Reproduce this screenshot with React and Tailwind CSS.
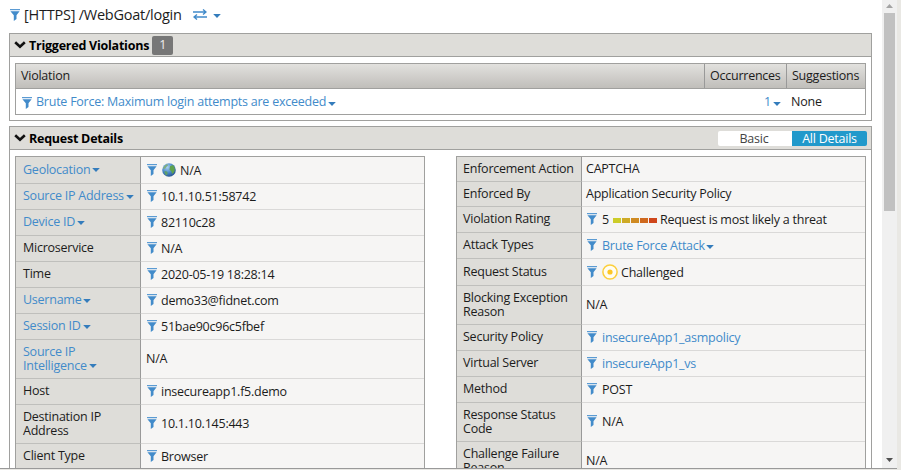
import React from "react";

function Funnel({ className = "" }) {
  return (
    <svg className={`h-[12px] w-[10px] shrink-0 ${className}`} viewBox="0 0 10 12">
      <path d="M0 0h10v1.200H0z" fill="#5b9bd3" />
      <path d="M0.4 2.200h9.200L6.500 6.300V10L3.800 11.900V6.300z" fill="#428bca" />
    </svg>
  );
}

function Caret({ className = "" }) {
  return (
    <svg className={`inline-block h-[4px] w-[8px] shrink-0 ${className}`} viewBox="0 0 8 4">
      <path d="M0.2 0h7.6L4 4z" fill="#347cbc" />
    </svg>
  );
}

function Chevron() {
  return (
    <svg className="ml-[4px] h-[8px] w-[12px] shrink-0" viewBox="0 0 12 8">
      <path d="M1.200 1.300L6 5.800l4.800-4.500" fill="none" stroke="#111" strokeWidth="2.6" />
    </svg>
  );
}

function Globe() {
  return (
    <svg className="mr-1 ml-px h-[14px] w-[14px] shrink-0" viewBox="0 0 14 14">
      <defs>
        <radialGradient id="sea" cx="38%" cy="30%" r="75%">
          <stop offset="0" stopColor="#a9d0f2" />
          <stop offset="0.55" stopColor="#4a88c8" />
          <stop offset="1" stopColor="#25508c" />
        </radialGradient>
      </defs>
      <circle cx="7" cy="7" r="6.8" fill="url(#sea)" />
      <path d="M1.500 4.500C2.500 2.500 4 1.300 5.500 1.200l.5 1.400-1.800 1.400-.8 1.600L1.200 6z" fill="#7fae7c" />
      <path d="M2.500 8l2.500.6.8 1.400-1 2.600C3.400 12 2.500 10.500 2.500 8z" fill="#5d9f6a" />
      <path d="M8 3.200l3-1.200c2 2 2.500 5 .8 7.600L10.300 11 9.400 8.400 7.500 6.500z" fill="#5fa24c" />
    </svg>
  );
}

function Challenged() {
  return (
    <svg className="mr-[3px] h-[16px] w-[16px] shrink-0" viewBox="0 0 16 16">
      <circle cx="8" cy="8" r="7.1" fill="#fffdf2" stroke="#fccf3c" strokeWidth="1.5" />
      <circle cx="8" cy="8" r="2.600" fill="#fcc626" />
    </svg>
  );
}

function Rating() {
  return (
    <span className="mr-[3px] ml-[4px] mt-px flex h-[5px] gap-px">
      <i className="w-2 bg-[#cccc29]" />
      <i className="w-2 bg-[#ceaa26]" />
      <i className="w-2 bg-[#cf8a22]" />
      <i className="w-2 bg-[#cf681e]" />
      <i className="w-2 bg-[#cf461b]" />
    </span>
  );
}

const left = [
  { label: "Geolocation", menu: true, h: "h-[27px]", filter: true, icon: <Globe />, value: "N/A" },
  { label: "Source IP Address", menu: true, h: "h-[26px]", filter: true, value: "10.1.10.51:58742" },
  { label: "Device ID", menu: true, h: "h-[26px]", filter: true, value: "82110c28" },
  { label: "Microservice", h: "h-[26px]", filter: true, value: "N/A" },
  { label: "Time", h: "h-[26px]", filter: true, value: "2020-05-19 18:28:14" },
  { label: "Username", menu: true, h: "h-[26px]", filter: true, value: "demo33@fidnet.com" },
  { label: "Session ID", menu: true, h: "h-[26px]", filter: true, value: "51bae90c96c5fbef" },
  { label: "Source IP Intelligence", menu: true, h: "h-[39px]", value: "N/A" },
  { label: "Host", h: "h-[26px]", filter: true, value: "insecureapp1.f5.demo" },
  { label: "Destination IP Address", h: "h-[39px]", filter: true, tall: true, value: "10.1.10.145:443" },
  { label: "Client Type", h: "h-[26px]", filter: true, value: "Browser" },
];

const right = [
  { label: "Enforcement Action", h: "h-[25px]", value: "CAPTCHA" },
  { label: "Enforced By", h: "h-[25px]", value: "Application Security Policy" },
  { label: "Violation Rating", h: "h-[26px]", filter: true, icon: <><span>5</span><Rating /></>, value: "Request is most likely a threat" },
  { label: "Attack Types", h: "h-[26px]", filter: true, link: true, valueMenu: true, value: "Brute Force Attack" },
  { label: "Request Status", h: "h-[27px]", filter: true, icon: <Challenged />, value: "Challenged" },
  { label: "Blocking Exception Reason", h: "h-[39px]", value: "N/A" },
  { label: "Security Policy", h: "h-[26px]", filter: true, link: true, value: "insecureApp1_asmpolicy" },
  { label: "Virtual Server", h: "h-[26px]", filter: true, link: true, value: "insecureApp1_vs" },
  { label: "Method", h: "h-[26px]", filter: true, value: "POST" },
  { label: "Response Status Code", h: "h-[39px]", filter: true, tall: true, value: "N/A" },
  { label: "Challenge Failure Reason", h: "h-[39px]", value: "N/A" },
];

function DetailTable({ rows, labelPad, valuePad, funnelGap }) {
  return (
    <div className="w-[410px] border border-[#a0a09e]">
      {rows.map((r) => (
        <div key={r.label} className={`flex leading-[14px] ${r.h}`}>
          <div className={`flex w-[125px] shrink-0 items-center border-r border-b border-r-[#999] border-b-[#bfbfbc] bg-[#deddd9] pb-px ${labelPad} ${r.menu ? "text-[#428bca]" : ""}`}>
            <span className={r.label.length > 18 ? "w-[110px]" : "whitespace-nowrap"}>
              {r.label}
              {r.menu && <Caret className="ml-[2px]" />}
            </span>
          </div>
          <div className={`flex min-w-0 flex-1 items-center border-b border-[#dad9d8] bg-[#f6f5f4] whitespace-nowrap ${valuePad} ${r.tall ? "pb-px" : ""} ${r.link ? "text-[#428bca]" : ""}`}>
            {r.filter && <Funnel className={`mb-px ml-px ${funnelGap}`} />}
            {r.icon}
            <span className={r.filter ? "pt-px" : ""}>{r.value}</span>
            {r.valueMenu && <Caret className="mt-[2px] ml-px" />}
          </div>
        </div>
      ))}
    </div>
  );
}

function SectionHeader({ title, children }) {
  return (
    <div className="flex h-[24px] items-center border border-[#a0a09e] bg-[#deddd9]">
      <Chevron />
      <h2 className="ml-[3px] pt-[3px] font-bold whitespace-nowrap text-black">{title}</h2>
      {children}
    </div>
  );
}

export default function App() {
  return (
    <div className="h-[470px] w-[901px] overflow-hidden bg-[#e9e8e4] font-['Open_Sans','Noto_Sans',sans-serif] text-[12.500px] tracking-[-0.240px] text-[#1c1c1c]">
      <div className="flex h-[469px] w-[897px] overflow-hidden border-b border-[#999] bg-white">
        <main className="w-[882px] pl-[9px]">
          <div className="flex h-[33px] items-center pb-[4px] text-[14.500px] whitespace-nowrap">
            <Funnel className="ml-px mr-[4px]" />
            <span className="leading-5">[HTTPS] /WebGoat/login</span>
            <svg className="ml-[11px] h-[11px] w-[14px]" viewBox="0 0 14 11" fill="none" stroke="#428bca" strokeWidth="1.4">
              <path d="M0 3h13M10 .5L13 3l-3 2.500M14 8H1M4 5.500L1 8l3 2.500" />
            </svg>
            <Caret className="mt-[3px] ml-[6px]" />
          </div>

          <section className="w-[863px]">
            <SectionHeader title="Triggered Violations">
              <span className="ml-[3px] flex h-[19px] w-[21px] items-center justify-center rounded-[2px] bg-[#777] pt-px text-[#eee]">1</span>
            </SectionHeader>
            <div className="h-[64px] border border-t-0 border-[#a0a09e] px-[5px] pt-[6px]">
              <div className="h-[52px] border border-[#a0a09e]">
                <div className="flex h-[25px] items-center border-b border-[#a0a09e] bg-linear-to-b from-[#e2e1de] to-[#c0beba] leading-6">
                  <span className="flex-1 pl-[5px]">Violation</span>
                  <span className="w-[82px] border-l border-[#999] pl-[5px]">Occurrences</span>
                  <span className="w-[79px] border-l border-[#999] pl-[5px]">Suggestions</span>
                </div>
                <div className="flex h-[25px] items-center pt-[2px]">
                  <div className="flex flex-1 items-center pl-[6px] text-[#428bca]">
                    <Funnel className="mr-[4px]" />
                    <span>Brute Force: Maximum login attempts are exceeded</span>
                    <Caret className="mt-[2px] ml-[2px]" />
                  </div>
                  <div className="flex w-[82px] items-center justify-end pr-[5px] text-[#428bca]">
                    1<Caret className="mt-[2px] ml-[2px]" />
                  </div>
                  <div className="w-[79px] pl-[5px]">None</div>
                </div>
              </div>
            </div>
          </section>

          <section className="mt-[5px] w-[863px]">
            <SectionHeader title="Request Details">
              <div className="mt-px mr-[4px] ml-auto flex h-[15px] leading-[15px]">
                <span className="w-[74px] rounded-l-[2px] bg-white pr-[2px] text-center text-[#444]">Basic</span>
                <span className="w-[75px] rounded-r-[2px] bg-[#2199cb] text-center text-white">All Details</span>
              </div>
            </SectionHeader>
            <div className="flex justify-between border-x border-[#a0a09e] px-[5px] pt-[6px]">
              <DetailTable rows={left} labelPad="pl-[7px]" valuePad="pl-[5px]" funnelGap="mr-[4px]" />
              <DetailTable rows={right} labelPad="pl-[6px]" valuePad="pl-[4px]" funnelGap="mr-[5px]" />
            </div>
          </section>
        </main>
        <aside className="flex w-[15px] flex-col items-center bg-[#f0f0f0]">
          <svg className="mt-[4px] h-[4px] w-[7px]" viewBox="0 0 7 4"><path d="M0 4h7L3.500 0z" fill="#a3a3a3" /></svg>
          <div className="mt-[5px] h-[198px] w-[11px] bg-[#c1c1c1]" />
          <svg className="mt-auto mb-[6px] h-[4px] w-[7px]" viewBox="0 0 7 4"><path d="M0 0h7L3.500 4z" fill="#505050" /></svg>
        </aside>
      </div>
    </div>
  );
}
